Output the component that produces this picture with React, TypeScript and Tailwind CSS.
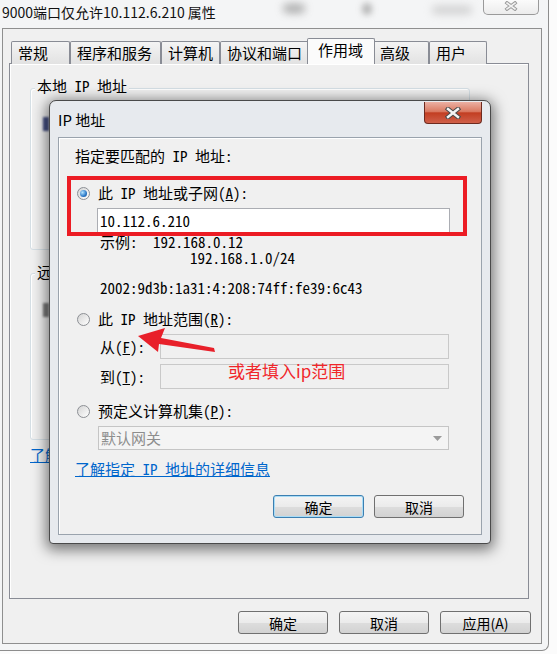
import React from "react";

// ============================================
// SHARED BITS - Win7 style controls
// ============================================

const mono =
  "font-['Noto_Sans_Mono_CJK_SC','Noto_Sans_CJK_SC',monospace] text-[15px]";

function Radio({ checked }: { checked?: boolean }) {
  return (
    <span className="flex h-[13px] w-[13px] shrink-0 items-center justify-center rounded-full border border-[#8c8f94] bg-[linear-gradient(135deg,#d4d4d4,#ffffff)]">
      {checked && (
        <span className="h-[7px] w-[7px] rounded-full bg-[radial-gradient(circle_at_35%_35%,#b4e4ff,#2a78c8_60%,#174a8a)]" />
      )}
    </span>
  );
}

function Button({
  label,
  primary,
  className,
}: {
  label: string;
  primary?: boolean;
  className?: string;
}) {
  return (
    <div
      className={
        "flex h-[23px] items-center justify-center rounded-[3px] border bg-[linear-gradient(#f4f4f4_0%,#ebebeb_50%,#dddddd_51%,#d2d2d2_100%)] text-[14px] leading-[18px] " +
        (primary
          ? "border-[#3c7fb1] shadow-[inset_0_0_0_1px_#a9dcf6] "
          : "border-[#707070] ") +
        (className ?? "")
      }
    >
      {label}
    </div>
  );
}

function Tab({
  label,
  width,
  selected,
}: {
  label: string;
  width: string;
  selected?: boolean;
}) {
  if (selected) {
    return (
      <div
        className={`relative z-10 -mx-[2px] h-[26px] rounded-t-[2px] border border-b-0 border-[#898c95] bg-[#fbfbfb] pl-[10px] pt-[2px] text-[15px] leading-[18px] ${width}`}
      >
        {label}
      </div>
    );
  }
  return (
    <div
      className={`h-[23px] rounded-t-[2px] border border-b-0 border-[#898c95] bg-[linear-gradient(#f4f4f4,#e2e2e2)] pl-[6px] pt-[2px] text-[15px] leading-[18px] ${width}`}
    >
      {label}
    </div>
  );
}

// ============================================
// DIALOG - IP 地址
// ============================================

function IpDialog() {
  return (
    <div className="absolute left-[49px] top-[100px] flex h-[444px] w-[442px] flex-col rounded-t-[7px] rounded-b-[4px] border border-[#4a4a4a] bg-[#e7eaee] shadow-[0_3px_14px_3px_rgba(0,0,0,0.5)]">
      <div className="flex h-[36px] items-start">
        <span className="pl-[8px] pt-[10px] text-[15px] leading-[18px]">
          IP 地址
        </span>
        <div className="ml-auto mr-[8px] mt-px flex h-[22px] w-[58px] items-center justify-center rounded-b-[4px] border border-t-0 border-[#6d2a1f] bg-[linear-gradient(#ebb0a3_0%,#da7a62_45%,#c23e22_52%,#d0604a_100%)]">
          <svg width="16" height="12" viewBox="0 0 16 12">
            <path
              d="M3 2 L13 10 M13 2 L3 10"
              stroke="#4a4a4a"
              strokeWidth="4.5"
              strokeLinecap="square"
            />
            <path
              d="M3 2 L13 10 M13 2 L3 10"
              stroke="#f4f4f4"
              strokeWidth="2.4"
              strokeLinecap="square"
            />
          </svg>
        </div>
      </div>

      <div
        className={`mx-[8px] flex h-[398px] flex-col border border-[#9aa3ad] bg-[#f0f0f0] shadow-[inset_1px_1px_0_#ffffff] ${mono}`}
      >
        <div className="mt-[9px] pl-[16px] leading-[18px]">
          指定要匹配的 IP 地址:
        </div>
        <div className="mt-[19px] flex items-center pl-[18px] leading-[18px]">
          <Radio checked />
          <span className="ml-[8px]">
            此 IP 地址或子网(<u>A</u>):
          </span>
        </div>
        <div className="ml-[38px] mt-[6px] flex h-[25px] w-[353px] items-center border border-[#abadb3] bg-white pl-[2px] leading-[18px]">
          10.112.6.210
        </div>
        <div className="mt-[1px] flex pl-[41px] leading-[16px]">
          <span className="w-[53px]">示例:</span>
          <span>192.168.0.12</span>
        </div>
        <div className="pl-[131px] leading-[16px]">192.168.1.0/24</div>
        <div className="mt-[14px] pl-[41px] leading-[16px]">
          2002:9d3b:1a31:4:208:74ff:fe39:6c43
        </div>
        <div className="mt-[14px] flex items-center pl-[18px] leading-[18px]">
          <Radio />
          <span className="ml-[8px]">
            此 IP 地址范围(<u>R</u>):
          </span>
        </div>
        <div className="mt-[6px] flex h-[25px] items-center pl-[41px] leading-[18px]">
          <span className="w-[60px]">
            从(<u>F</u>):
          </span>
          <div className="h-[25px] w-[289px] border border-[#c9c9c9] bg-[#f0f0f0]" />
        </div>
        <div className="mt-[5px] flex h-[25px] items-center pl-[41px] leading-[18px]">
          <span className="w-[60px]">
            到(<u>T</u>):
          </span>
          <div className="h-[25px] w-[289px] border border-[#c9c9c9] bg-[#f0f0f0]" />
        </div>
        <div className="mt-[13px] flex items-center pl-[18px] leading-[18px]">
          <Radio />
          <span className="ml-[8px]">
            预定义计算机集(<u>P</u>):
          </span>
        </div>
        <div className="ml-[39px] mt-[6px] flex h-[24px] w-[351px] items-center justify-between border border-[#c5c5c5] bg-[#f4f4f4] pl-[2px] pr-[6px] leading-[18px] text-[#8d8d8d]">
          默认网关
          <svg width="9" height="5" viewBox="0 0 9 5">
            <path d="M0 0 H9 L4.5 5 Z" fill="#9a9a9a" />
          </svg>
        </div>
        <div className="mt-[10px] pl-[16px] leading-[18px] text-[#0066cc] underline">
          了解指定 IP 地址的详细信息
        </div>
        <div className="mt-[17px] flex justify-end gap-[10px] pr-[17px] font-['Noto_Sans_CJK_SC',sans-serif]">
          <Button label="确定" primary className="w-[91px]" />
          <Button label="取消" className="w-[90px]" />
        </div>
      </div>
    </div>
  );
}

// ============================================
// PAGE
// ============================================

export default function App() {
  return (
    <div className="relative h-[654px] w-[557px] overflow-hidden bg-[#fbfbfb] font-['Noto_Sans_CJK_SC',sans-serif] text-black">
      {/* main properties window */}
      <div className="flex h-[651px] w-[549px] flex-col rounded-br-[7px] border-b border-r border-[#8d8d8d] bg-[#f4f5f6]">
        <div className="relative flex h-[28px] items-start">
          <span className="pl-[2px] pt-[2px] text-[14px] leading-[20px] text-[#111]">
            9000端口仅允许10.112.6.210 属性
          </span>
          <div className="absolute left-[283px] top-[4px] h-[9px] w-[22px] rounded-full bg-[#8a8a8a] opacity-70 blur-[4px]" />
          <div className="absolute left-[362px] top-[3px] h-[12px] w-[10px] rounded-full bg-[#9a9a9a] opacity-70 blur-[3px]" />
          <div className="absolute left-[432px] top-[6px] h-[8px] w-[40px] rounded-full bg-[#b5b5b5] opacity-60 blur-[4px]" />
          <div className="ml-auto mr-[9px] -mt-[2px] flex h-[17px] w-[56px] items-center justify-center rounded-b-[5px] border border-t-0 border-[#9a9a9a] bg-[linear-gradient(#fdfdfd,#ececec)]">
            <svg width="14" height="10" viewBox="0 0 14 10">
              <path
                d="M3 2 L11 8 M11 2 L3 8"
                stroke="#9c9c9c"
                strokeWidth="3.5"
                strokeLinecap="square"
              />
              <path
                d="M3 2 L11 8 M11 2 L3 8"
                stroke="#f2f2f2"
                strokeWidth="1.6"
                strokeLinecap="square"
              />
            </svg>
          </div>
        </div>

        <div className="ml-[2px] flex h-[616px] w-[540px] flex-col border border-[#8f8f8f] bg-[#f0f0f0] px-[6px] pt-[9px]">
          <div className="relative z-10 -mb-px flex h-[26px] items-end pl-[2px]">
            <Tab label="常规" width="w-[59px]" />
            <Tab label="程序和服务" width="w-[91px]" />
            <Tab label="计算机" width="w-[59px]" />
            <Tab label="协议和端口" width="w-[89px]" />
            <Tab label="作用域" width="w-[68px]" selected />
            <Tab label="高级" width="w-[56px]" />
            <Tab label="用户" width="w-[58px]" />
          </div>

          <div
            className={`flex h-[536px] w-[520px] flex-col border border-[#898c95] bg-[#f0f0f0] pl-[20px] shadow-[inset_1px_1px_0_#ffffff] ${mono}`}
          >
            <div className="mt-[24px] h-[162px] w-[440px] rounded-[3px] border border-[#d5dfe5] shadow-[inset_1px_1px_0_#ffffff]">
              <span className="-mt-[12px] ml-[4px] block w-fit bg-[#f0f0f0] px-[2px] leading-[18px]">
                本地 IP 地址
              </span>
            </div>
            <div className="mt-[23px] h-[167px] w-[440px] rounded-[3px] border border-[#d5dfe5] shadow-[inset_1px_1px_0_#ffffff]">
              <span className="-mt-[11px] ml-[4px] block w-fit bg-[#f0f0f0] px-[2px] leading-[18px]">
                远程
              </span>
            </div>
            <div className="mt-[6px] leading-[18px] text-[#0066cc] underline">
              了解
            </div>
          </div>

          <div className="mt-[12px] flex justify-end gap-[11px] pr-[4px]">
            <Button label="确定" className="w-[90px]" />
            <Button label="取消" className="w-[90px]" />
            <Button label="应用(A)" className="w-[91px]" />
          </div>
        </div>
      </div>

      {/* blurred list items showing beside the dialog */}
      <div className="absolute left-[43px] top-[117px] h-[14px] w-[6px] bg-[#1c2a6b] opacity-80 blur-[1px]" />
      <div className="absolute left-[43px] top-[303px] h-[14px] w-[6px] bg-[#4a4a4a] opacity-70 blur-[1px]" />

      <IpDialog />

      {/* annotations drawn over the screenshot */}
      <div className="absolute left-[67px] top-[176px] h-[60px] w-[400px] border-4 border-[#ec1c24]" />
      <svg
        className="absolute left-[130px] top-[320px]"
        width="92"
        height="40"
        viewBox="0 0 92 40"
      >
        <polygon
          points="8,16 35,8 31,18 84,28 85,32 29,24 28,32"
          fill="#e8202a"
        />
      </svg>
      <div className="absolute left-[228px] top-[360px] text-[17px] leading-[22px] text-[#f0262a]">
        或者填入ip范围
      </div>
    </div>
  );
}
